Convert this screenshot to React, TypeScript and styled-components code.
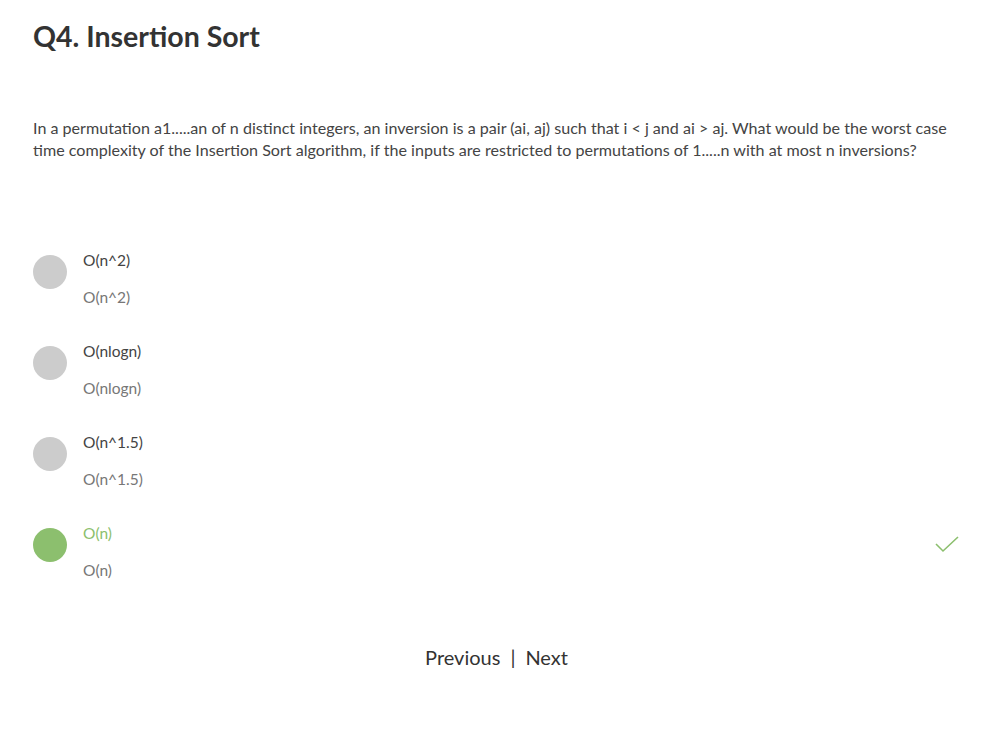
import React from "react";
import styled, { createGlobalStyle } from "styled-components";

const Global = createGlobalStyle`
  html, body { margin: 0; padding: 0; background: #fff; }
  body { font-family: "Lato", "Open Sans", sans-serif; color: #333; }
`;

const Page = styled.div`
  padding: 17px 33px 0 33px;
  display: flex;
  flex-direction: column;
`;

const Title = styled.h1`
  margin: 0;
  font-size: 28.5px;
  font-weight: 700;
  line-height: 38px;
  color: #333;
`;

const Question = styled.p`
  margin: 62px 0 0 0;
  font-size: 16.1px;
  line-height: 22px;
  color: #444;
`;

const Options = styled.div`
  margin-top: 88px;
  display: flex;
  flex-direction: column;
  gap: 19px;
`;

const Option = styled.div`
  display: flex;
  align-items: flex-start;
  gap: 16px;
  height: 72px;
`;

const Dot = styled.div<{ $correct?: boolean }>`
  width: 34px;
  height: 34px;
  margin-top: 6px;
  border-radius: 50%;
  background: ${(p) => (p.$correct ? "#8cbf6e" : "#cccccc")};
  flex-shrink: 0;
`;

const Texts = styled.div`
  flex: 1;
  display: flex;
  flex-direction: column;
  gap: 15px;
`;

const Label = styled.div<{ $correct?: boolean }>`
  font-size: 15.5px;
  line-height: 22px;
  color: ${(p) => (p.$correct ? "#8cbf6e" : "#444")};
`;

const Sub = styled.div`
  font-size: 15.5px;
  line-height: 22px;
  color: #777;
`;

const Check = styled.svg`
  width: 26px;
  height: 20px;
  margin-top: 13px;
  flex-shrink: 0;
`;

const Nav = styled.div`
  margin-top: 51px;
  display: flex;
  justify-content: center;
  align-items: center;
  gap: 10px;
  font-size: 20px;
  color: #333;
`;

const NavLink = styled.span`
  cursor: pointer;
`;

const options = [
  { label: "O(n^2)", correct: false },
  { label: "O(nlogn)", correct: false },
  { label: "O(n^1.5)", correct: false },
  { label: "O(n)", correct: true },
];

export default function App() {
  return (
    <>
      <Global />
      <Page>
        <Title>Q4. Insertion Sort</Title>
        <Question>
          In a permutation a1.....an of n distinct integers, an inversion is a pair (ai, aj) such that i &lt; j and ai &gt; aj. What would be the worst case time complexity of the Insertion Sort algorithm, if the inputs are restricted to permutations of 1.....n with at most n inversions?
        </Question>
        <Options>
          {options.map((o) => (
            <Option key={o.label}>
              <Dot $correct={o.correct} />
              <Texts>
                <Label $correct={o.correct}>{o.label}</Label>
                <Sub>{o.label}</Sub>
              </Texts>
              {o.correct && (
                <Check viewBox="0 0 26 20">
                  <path d="M2 9 L9 16 L24 2" fill="none" stroke="#8cbf6e" strokeWidth="1.6" />
                </Check>
              )}
            </Option>
          ))}
        </Options>
        <Nav>
          <NavLink>Previous</NavLink>
          <span>|</span>
          <NavLink>Next</NavLink>
        </Nav>
      </Page>
    </>
  );
}
